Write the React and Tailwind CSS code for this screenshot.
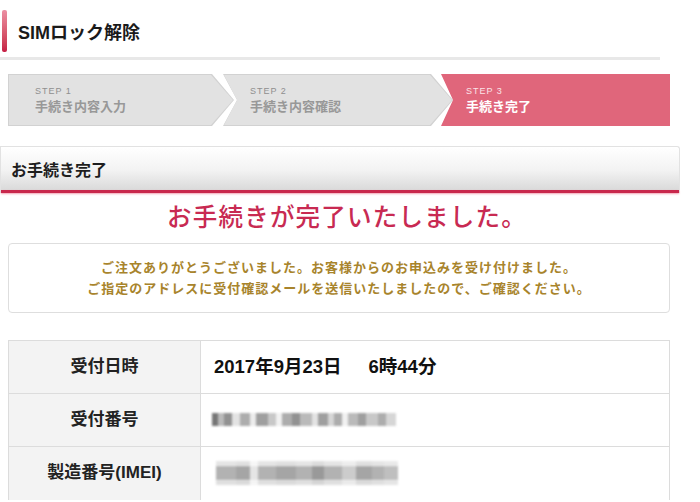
import React from "react";

const font = { fontFamily: '"Liberation Sans", "Noto Sans CJK JP", sans-serif' };

function Blur({ blocks, className }) {
  return (
    <div className={"flex blur-[1px] " + className}>
      {blocks.map((c, i) => (
        <div key={i} style={{ width: c[0], background: c[1] }} className="h-full" />
      ))}
    </div>
  );
}

export default function App() {
  const row2 = [
    [6, "#555"], [6, "#aaa"], [8, "#777"], [8, "#ddd"], [10, "#999"], [6, "#e8e8e8"], [12, "#888"], [8, "#bbb"], [6, "#eee"], [10, "#999"], [8, "#777"], [12, "#aaa"], [6, "#ddd"], [10, "#888"], [6, "#ccc"], [8, "#999"], [6, "#eee"], [10, "#aaa"], [8, "#888"], [12, "#bbb"], [8, "#999"], [10, "#ccc"],
  ];
  const row3 = [
    [20, "#999"], [14, "#888"], [8, "#ddd"], [18, "#999"], [20, "#888"], [16, "#999"], [12, "#777"], [18, "#999"], [14, "#bbb"], [16, "#888"], [12, "#999"], [14, "#aaa"],
  ];
  return (
    <div className="w-[700px] h-[502px] bg-white overflow-hidden relative" style={font}>
      {/* Title */}
      <div className="flex items-center h-[42px] mt-[10px] pl-[2px]">
        <div className="w-[5px] h-[42px] rounded-[2px] bg-gradient-to-b from-[#eb8fa3] to-[#c51d44]" />
        <div className="ml-[11px] mt-[3px] text-[18px] font-bold text-[#1a1a1a] leading-none">SIMロック解除</div>
      </div>
      <div className="mt-[5px] h-[3px] w-[660px] bg-[#e8e8e8]" />

      {/* Steps */}
      <div className="flex mt-[14px] ml-[8px] h-[52px]">
        <div className="w-[226px] h-full bg-[#d2d2d2] [clip-path:polygon(0_0,calc(100%-22px)_0,100%_50%,calc(100%-22px)_100%,0_100%)] p-[1px]">
          <div className="w-full h-full bg-[#e2e2e2] [clip-path:polygon(0_0,calc(100%-22px)_0,100%_50%,calc(100%-22px)_100%,0_100%)] pl-[26px] pt-[12px]">
            <div className="text-[9px] tracking-[1px] text-[#8f8f8f] leading-none">STEP 1</div>
            <div className="mt-[4px] text-[13px] font-bold text-[#989898] leading-none">手続き内容入力</div>
          </div>
        </div>
        <div className="-ml-[11px] w-[230px] h-full bg-[#d2d2d2] [clip-path:polygon(0_0,calc(100%-22px)_0,100%_50%,calc(100%-22px)_100%,0_100%,14px_50%)] p-[1px]">
          <div className="w-full h-full bg-[#e2e2e2] [clip-path:polygon(0_0,calc(100%-22px)_0,100%_50%,calc(100%-22px)_100%,0_100%,13px_50%)] pl-[26px] pt-[12px]">
            <div className="text-[9px] tracking-[1px] text-[#8f8f8f] leading-none">STEP 2</div>
            <div className="mt-[4px] text-[13px] font-bold text-[#989898] leading-none">手続き内容確認</div>
          </div>
        </div>
        <div className="-ml-[12px] w-[229px] h-full bg-[#e0667b] [clip-path:polygon(0_0,100%_0,100%_100%,0_100%,12px_50%)] pl-[25px] pt-[13px]">
          <div className="text-[9px] tracking-[1px] text-[#fbe3e8] leading-none">STEP 3</div>
          <div className="mt-[4px] text-[13px] font-bold text-white leading-none">手続き完了</div>
        </div>
      </div>

      {/* Section header */}
      <div className="mt-[20px] w-[680px] h-[47px] border border-[#e2e2e2] border-b-0 rounded-tr-[3px] bg-gradient-to-b from-white via-[#f3f3f3] to-[#d6d6d6] flex flex-col">
        <div className="flex-1 flex items-center pl-[10px] text-[16px] font-bold text-[#1e1e1e] leading-none pt-[4px]">お手続き完了</div>
        <div className="h-[3px] bg-[#c8284c] shadow-[0_1px_2px_#f3a4b5]" />
      </div>

      {/* Completed title */}
      <div className="mt-[13px] w-[680px] pl-[14px] text-center text-[24.5px] tracking-[1.2px] font-medium text-[#c82a52] leading-none">お手続きが完了いたしました。</div>

      {/* Message box */}
      <div className="mt-[12px] ml-[8px] w-[662px] h-[70px] border border-[#dedede] rounded-[4px] flex flex-col items-center justify-center gap-[8px] text-[13px] tracking-[1px] font-bold text-[#a8842c] leading-none">
        <div>ご注文ありがとうございました。お客様からのお申込みを受け付けました。</div>
        <div>ご指定のアドレスに受付確認メールを送信いたしましたので、ご確認ください。</div>
      </div>

      {/* Table */}
      <div className="mt-[27px] ml-[8px] w-[662px] border border-[#dcdcdc] border-b-0">
        <div className="flex h-[53px] border-b border-[#dcdcdc]">
          <div className="w-[192px] bg-[#f3f3f3] border-r border-[#dcdcdc] flex items-center justify-center text-[17px] font-bold text-[#222]">受付日時</div>
          <div className="flex-1 flex items-center pl-[13px] gap-[27px] text-[18.5px] font-bold text-[#111]">
            <span>2017年9月23日</span>
            <span>6時44分</span>
          </div>
        </div>
        <div className="flex h-[53px] border-b border-[#dcdcdc]">
          <div className="w-[192px] bg-[#f3f3f3] border-r border-[#dcdcdc] flex items-center justify-center text-[17px] font-bold text-[#222]">受付番号</div>
          <div className="flex-1 flex items-center pl-[11px]">
            <Blur blocks={row2} className="h-[13px] opacity-80" />
          </div>
        </div>
        <div className="flex h-[53px]">
          <div className="w-[192px] bg-[#f3f3f3] border-r border-[#dcdcdc] flex items-center justify-center text-[17px] font-bold text-[#222]">製造番号(IMEI)</div>
          <div className="flex-1 flex flex-col justify-center pl-[15px]">
            <Blur blocks={row3} className="h-[5px] opacity-25" />
            <Blur blocks={row3} className="h-[14px] opacity-75" />
            <Blur blocks={row3} className="h-[5px] opacity-30" />
          </div>
        </div>
      </div>
    </div>
  );
}
